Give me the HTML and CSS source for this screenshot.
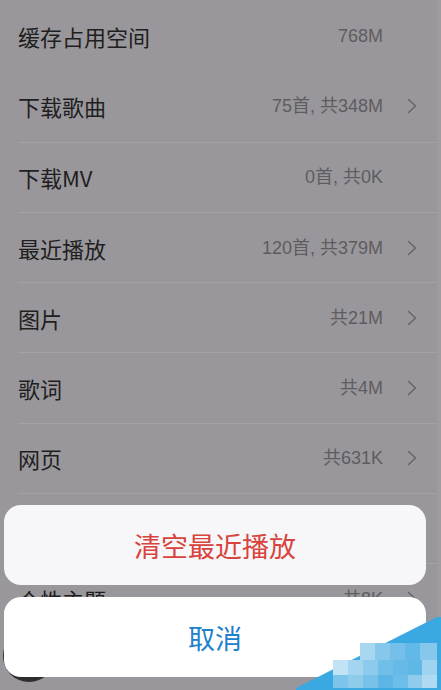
FILE: index.html
```html
<!DOCTYPE html>
<html lang="zh">
<head>
<meta charset="utf-8">
<link rel="stylesheet" href="styles.css">
</head>
<body>
<div class="screen">
  <ul class="list">
    <li class="row first"><span class="label">缓存占用空间</span><span class="value">768M</span><span class="chev"></span></li>
    <li class="row"><span class="label">下载歌曲</span><span class="value">75首, 共348M</span><span class="chev"><svg viewBox="0 0 10 16" width="10" height="16"><polyline points="1.5,1.5 8.5,8 1.5,14.5"/></svg></span></li>
    <li class="row line"><span class="label">下载MV</span><span class="value">0首, 共0K</span><span class="chev"></span></li>
    <li class="row line"><span class="label">最近播放</span><span class="value">120首, 共379M</span><span class="chev"><svg viewBox="0 0 10 16" width="10" height="16"><polyline points="1.5,1.5 8.5,8 1.5,14.5"/></svg></span></li>
    <li class="row line"><span class="label">图片</span><span class="value">共21M</span><span class="chev"><svg viewBox="0 0 10 16" width="10" height="16"><polyline points="1.5,1.5 8.5,8 1.5,14.5"/></svg></span></li>
    <li class="row line"><span class="label">歌词</span><span class="value">共4M</span><span class="chev"><svg viewBox="0 0 10 16" width="10" height="16"><polyline points="1.5,1.5 8.5,8 1.5,14.5"/></svg></span></li>
    <li class="row line"><span class="label">网页</span><span class="value">共631K</span><span class="chev"><svg viewBox="0 0 10 16" width="10" height="16"><polyline points="1.5,1.5 8.5,8 1.5,14.5"/></svg></span></li>
    <li class="row line spacer"></li>
    <li class="row line"><span class="label">个性主题</span><span class="value">共8K</span><span class="chev"><svg viewBox="0 0 10 16" width="10" height="16"><polyline points="1.5,1.5 8.5,8 1.5,14.5"/></svg></span></li>
  </ul>
  <div class="avatar"></div>
  <div class="edge"></div>

  <div class="sheet">
    <button class="btn danger">清空最近播放</button>
    <button class="btn cancel">取消</button>
  </div>

  <svg class="mark" viewBox="290 610 151 80" width="151" height="80">
    <polygon points="296,688 437,617 441,617 441,690 296,690" fill="#3aa9e2"/>
    <rect x="360" y="643" width="15" height="17" fill="#a8d7f0"/>
    <rect x="375" y="643" width="15" height="17" fill="#86c8ec"/>
    <rect x="390" y="643" width="15" height="17" fill="#74c0ea"/>
    <rect x="405" y="643" width="15" height="17" fill="#62b8e6"/>
    <rect x="420" y="643" width="17" height="17" fill="#86c8ec"/>
    <rect x="333" y="660" width="15" height="15" fill="#c2e3f5"/>
    <rect x="348" y="660" width="15" height="15" fill="#a3d5f0"/>
    <rect x="363" y="660" width="15" height="15" fill="#8ccbec"/>
    <rect x="378" y="660" width="15" height="15" fill="#70bfe9"/>
    <rect x="393" y="660" width="15" height="15" fill="#66bae7"/>
    <rect x="408" y="660" width="14" height="15" fill="#5fb7e6"/>
    <rect x="422" y="660" width="15" height="15" fill="#a0d3ef"/>
    <rect x="333" y="675" width="15" height="13" fill="#7cc4ea"/>
    <rect x="348" y="675" width="15" height="13" fill="#8fccec"/>
    <rect x="363" y="675" width="15" height="13" fill="#78c2e9"/>
    <rect x="378" y="675" width="15" height="13" fill="#5cb5e5"/>
    <rect x="393" y="675" width="15" height="13" fill="#6cbde8"/>
    <rect x="408" y="675" width="14" height="13" fill="#8ecbec"/>
    <rect x="422" y="675" width="15" height="13" fill="#b0daf1"/>
  </svg>
</div>
</body>
</html>
```

FILE: styles.css
```css
html, body {
  margin: 0;
  padding: 0;
}
body {
  width: 441px;
  height: 690px;
  overflow: hidden;
  background: #99979b;
  font-family: "Noto Sans CJK SC", "Noto Sans", sans-serif;
}
.screen {
  position: relative;
  width: 441px;
  height: 690px;
  overflow: hidden;
  background: #99979b;
}
.list {
  list-style: none;
  margin: 0;
  padding: 1px 0 0 0;
}
.row {
  height: 70.3px;
  box-sizing: border-box;
  display: flex;
  align-items: center;
  padding-left: 18px;
  padding-right: 20px;
}
.row.line {
  border-top: 1px solid #a4a2a6;
  margin-left: 18px;
  padding-left: 0;
}
.label {
  flex: 1;
  font-size: 22px;
  color: #1f1e21;
  line-height: 1;
}
.value {
  font-family: "Liberation Sans", "Noto Sans CJK SC", sans-serif;
  font-size: 18px;
  color: #5e5c61;
  line-height: 1;
}
.chev {
  width: 38px;
  display: flex;
  justify-content: flex-end;
  align-items: center;
  padding-right: 4px;
  box-sizing: border-box;
}
.chev svg polyline {
  fill: none;
  stroke: #66646a;
  stroke-width: 1.5;
  stroke-linecap: round;
  stroke-linejoin: round;
}
.edge {
  position: absolute;
  top: 0;
  right: 0;
  width: 4px;
  height: 690px;
  background: #9e9ca0;
}
.avatar {
  position: absolute;
  left: 3px;
  top: 630px;
  width: 52px;
  height: 52px;
  border-radius: 50%;
  background: #2e2d30;
}
.sheet {
  position: absolute;
  left: 4px;
  top: 505px;
  width: 422px;
  display: flex;
  flex-direction: column;
  gap: 12px;
}
.btn {
  border: none;
  margin: 0;
  padding: 0;
  width: 100%;
  border-radius: 17px;
  font-family: "Noto Sans CJK SC", "Noto Sans", sans-serif;
  font-size: 27px;
  line-height: 1;
}
.btn.danger {
  height: 80px;
  background: #f7f6f8;
  color: #d8433d;
}
.btn.cancel {
  height: 80px;
  background: #ffffff;
  color: #2080cc;
}
.mark {
  position: absolute;
  left: 290px;
  top: 610px;
}
```
